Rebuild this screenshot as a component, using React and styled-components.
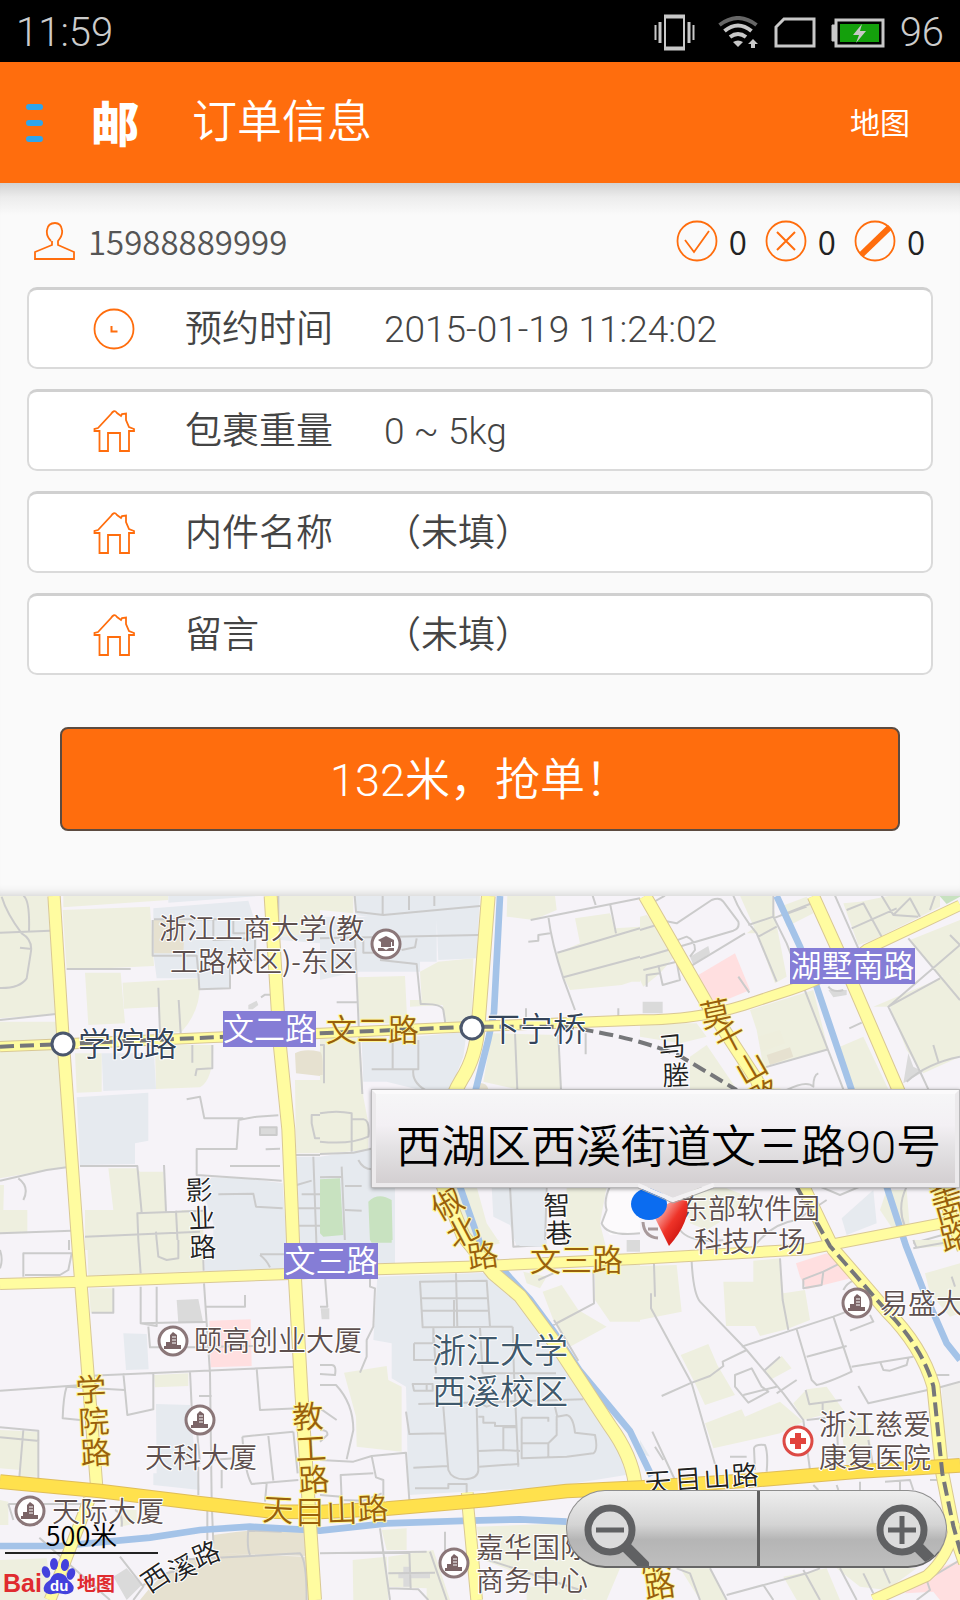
import React from "react";
import styled, { createGlobalStyle } from "styled-components";

const ORANGE = "#ff6d0d";

const ORDER_FIELDS = [
  { icon: "clock", label: "预约时间", value: "2015-01-19 11:24:02" },
  { icon: "house", label: "包裹重量", value: "0 ~ 5kg" },
  { icon: "house", label: "内件名称", value: "（未填）" },
  { icon: "house", label: "留言", value: "（未填）" },
];

// The map is surveyed in six 960x1080 tiles, three map units to a pixel
const TILES = [
  {
    x: 0,
    y: -18,
    areas: {
      green:
        "M0 17H142L168 372L0 385Z M0 395H168L200 830L0 865Z M188 60L450 50L462 228L200 240Z M190 17H505V30L190 52Z M255 248H362L375 400L265 405Z M368 278L600 265Q605 360 545 425L480 430V350L372 356Z M225 490H305V605L230 608Z M465 465H640Q640 570 600 592L468 597Z M0 885H12L10 960H82V1030L0 1030Z M325 835H410L420 845H490L500 965H580V1080H255V960H340Z M835 17H960V130L840 140Z M885 570H960V790L888 790Z M545 960H610V1080H580Z",
      blue:
        "M505 17H790L505 38Z M460 55L745 32L770 110V190L690 200V295H600L595 265H470L460 190Z M305 490H462L468 597L310 603Z M230 622L445 608V752L405 760V822L240 825Z M595 862L740 865L848 880L862 1080H640V1000Z M885 800H960V1080H900Z M840 140L960 130V160L842 150Z",
      beige: "M460 90L555 92L550 190H462Z M885 490Q910 475 960 485V558L888 550Z",
      gray: "M745 345L770 332L775 345L758 358H745Z M780 712H830V735H780Z",
    },
    lines:
      "M5 20Q20 70 65 130Q100 150 92 190L80 265Q60 295 0 294 M70 17Q90 30 87 125 M0 128L150 122 M60 173L95 177 M0 390L168 372 M200 237H392 M475 293L480 430 M536 330L542 430 M458 90V197H590Q595 240 598 298L690 295V210H765V150 M462 88H700V130H760 M640 90V150L760 145 M240 828H412L425 968 M492 825L498 966 M410 970L610 962 M412 968L416 1080 M528 962L534 1080 M255 1040L600 1025 M468 1025L472 1080 M0 872L140 840L200 832 M55 865Q90 890 70 930 M0 1030L215 1022 M207 1050V1080 M560 628L600 620L613 685H730 M577 465V518 M637 465V535L590 538L586 558 M715 690L770 680L835 676 M716 690L710 777H590V855L845 872 M690 828H840 M797 778L840 776 M655 913L760 911L768 950L848 955 M783 322L795 314H810 M780 712H830V735H780Z M885 795L960 795 M940 800L950 1080 M890 885L935 872 M905 913H960 M880 955H960 M895 1007H960 M835 17V100 M960 675H935V700L945 745H960",
  },
  {
    x: 960,
    y: -18,
    areas: {
      green:
        "M0 17H100V70L0 60Z M110 262L255 258L262 400H120Z M270 330H305L300 245L355 215L460 205L455 400L375 395L368 345L270 350Z M562 17H705L710 60L640 90L560 80Z M765 85L870 70L885 115L960 110V275H935L905 285L750 300L720 240L710 190L780 160Z M515 430L715 435L725 598H590L490 575Z M0 445H120L130 620L145 700V780L0 792Z M385 890H470L500 1000L540 1060L480 1075L430 1000Z M740 890H860L840 1000L860 1080H735Z",
      blue:
        "M105 17H480L470 205L355 210L350 90L200 88L105 75Z M0 80H350V215H300V245H110L0 270Z M125 455L440 425L430 500L390 600H300L200 575H130Z M0 800L160 775V890H225V1080H0Z M515 890H675V1070H590L570 1005L520 980Z",
      park: "M0 868L60 865L70 1035L10 1040L0 1030Z M145 935Q175 905 215 930L218 1055H150Z",
      beige: "M470 580Q500 575 505 598H470Z M0 485Q10 490 8 555H0Z",
      white: "M870 890Q930 880 960 890V1030L870 1035L845 1000L860 950Z",
    },
    lines:
      "M104 17L108 65L190 75L480 48 M188 17V73 M267 17V60 M343 17V48 M0 145L475 135 M130 150V188H180 M105 150L118 450L127 612 M50 337H110 M245 180L285 172L290 145 M180 210L290 222L302 342Q365 340 370 360L376 400 M0 465H12V580 M218 455V535 M155 538H295V450 M280 540Q275 580 325 605 M0 670Q50 660 95 670V785 M0 755Q90 765 145 740Q150 690 130 688H98 M0 792L100 788L160 775 M65 830L75 1060 M0 862L65 860 M75 888H125 M75 960L125 962 M115 810Q130 840 160 838 M818 17L827 45 M632 90L960 25 M870 40L888 130 M712 188L960 115 M685 80Q695 160 730 265L765 360 M625 155L655 152V135L690 130 M730 262L960 200 M618 355V385 M585 430L592 600 M715 435L723 600 M797 430V493 M895 355V378 M570 890L580 1070L675 1065L680 890 M870 890Q850 930 860 960L845 1000Q860 1040 960 1030",
  },
  {
    x: 1920,
    y: -18,
    areas: {
      green:
        "M0 80L20 75L120 180L60 250L10 290L0 270Z M300 17H395L410 105L440 260L405 280L350 130Z M420 50L500 20L520 70L440 110Z M610 40L660 35L750 17H900V50L700 150L655 165Z M330 360L520 300L565 480L370 530L350 420Z M600 470L670 440L745 598H640Z M150 500L200 465L290 598H150Z M700 350L890 270L960 230V500L850 550L800 480L750 350Z M810 150L960 90V250L900 260Z M120 890L260 895L350 930L200 1020L150 1000Z M720 960L740 900L800 900L810 1020H760Z M0 400H170L200 440L120 460L0 440Z",
      pink: "M175 255L285 190L330 300L245 335L205 330Z",
      beige: "M380 495L450 472L460 500L390 525Z",
      park: "M898 17H960V20L920 42Z",
      gray: "M150 200L205 168L210 190L160 225Z M8 335H68V370H8Z M565 300H620V315L580 322Z M790 580L805 490L820 530L850 545Z",
      blue: "M605 985L700 900L710 1000L620 1035Z",
      soft: "M355 440L420 420L435 460L365 485Z M320 130L390 80L410 130Z",
    },
    lines:
      "M25 45L75 17 M0 120L50 105L60 90L110 100L215 30Q240 20 250 35L295 95Q300 115 280 122L0 205 M10 240L110 215L120 270L68 285L55 225 M20 290V255L60 250 M100 155L140 140Q165 150 165 180L150 200 M150 230L315 130 M280 17Q300 70 350 130L410 275 M325 105L400 80V17 M400 80L440 160L610 598 M355 140L410 110 M400 85L540 30 M430 75L500 50 M585 17L655 175 M620 60L670 40L725 140 M635 115L770 55 M725 17L760 75L835 80 M760 75L810 25L840 80 M805 145L960 330 M885 17L870 60 M930 135L960 165L745 350L845 555L865 598 M745 350L900 265 M880 465L895 515 M960 500Q860 520 800 575 M295 260L328 308 M365 535L565 478 M440 600Q500 570 520 590Q520 555 535 550 M628 415L665 398 M565 290Q580 310 610 300 M540 890L600 915L660 890 M800 890Q770 950 795 1010 M350 1060Q400 1000 470 990L560 930 M820 1060L960 1020 M120 1020Q150 1060 250 1050",
  },
  {
    x: 0,
    y: 1032,
    areas: {
      green:
        "M262 0H608L612 92L265 108Z M268 145H340V218H272Z M462 405L565 400V438L465 442Z M0 570L115 575L118 600L112 710H60V690L0 685Z M0 780L25 785V855H0Z M0 960L140 955L160 1080H0Z M360 810H410V850L360 860Z",
      blue: "M612 0H870V90L615 95Z M370 280L440 282L446 388L378 390Z M468 492L570 495L580 600L600 750L460 735V700H470Z",
      pink: "M628 242L752 238L755 378L632 382Z",
      beige: "M420 1080Q520 950 640 940L920 950V1080Z M640 885Q800 860 920 868V948L640 940Z",
      gray: "M530 180L595 177L610 250H535Z M340 1010L380 985L425 1035L380 1080Z",
    },
    lines:
      "M70 110V40H215L205 90L180 105H75 M0 30Q10 60 0 85 M415 0L422 100 M470 0L475 50L500 60L535 55V0 M608 0L611 92 M780 45Q800 60 810 82 M780 43H870 M340 145V218H275 M422 140V250L470 258V140 M612 130L630 400L635 780 M615 200H735V165 M425 250L620 245 M445 260L450 322H620 M628 320L760 318 M0 452L290 432 M255 408L890 380 M370 400L375 450L200 440Q190 470 188 535L240 540 M375 450L382 525L460 508V402 M570 395L575 500 M597 468H635 M770 385L780 510L895 505 M0 562L115 572V715 M0 592L118 603 M70 570L58 712 M727 590L880 575 M727 590Q735 700 755 732L895 720 M805 588L820 722 M880 575L893 700 M800 730L795 785 M630 660L705 655 M665 690V745 M595 680V765 M590 560L600 670 M25 792H250 M25 792L40 840 M118 893L250 1010L330 1080 M360 950L430 1040L400 1080 M622 810V900 M636 810L640 910 M745 870Q740 920 750 945 M745 872L845 875 M520 960L900 940Q920 960 920 1080 M430 1035L500 1000L560 985 M365 860Q370 820 345 810",
  },
  {
    x: 960,
    y: 1032,
    areas: {
      green:
        "M72 398L200 378L205 420L245 440V635L110 620L108 530Z M825 75H960V245H870L825 180Z M668 155L725 135L775 210L860 260L750 320L700 240Z M610 95L680 110L660 145L620 130Z M470 860L735 850L900 985L860 1080H800L490 960Z M98 960L200 950L205 1080H100Z M185 870L260 865V930H200Z M205 950L340 930L390 1080H320V1045L205 1040Z M620 1040H790V1080H620Z M480 0H540L510 20Z",
      blue: "M172 110L500 98L590 180L730 350L890 600L918 705L700 740L265 765L258 440L215 415V310L160 300Z M580 0H680V20L600 18Z M0 0H225V70H180Z",
      gray: "M2 205H28V238H5Z M235 1000H330V1015H235Z M250 980H270V1040H250Z M920 0H960V35H920Z",
      park: "M150 0H215V8H155Z",
    },
    lines:
      "M15 110L22 200H0 M150 90V140L165 145L160 260L140 300V350L120 398 M300 125L500 122L510 260L308 262Z M300 175L503 174 M302 212L506 212 M408 100L412 262 M402 180V262 M282 310H340V262L348 400 M282 310V360H345 M480 262L488 400 M578 260L582 400L595 680 M510 260H578 M488 400H708 M278 432H338V452H282Z M320 432V452 M295 492L790 478 M480 490L500 500L530 490 M370 500L385 690Q395 718 435 718Q475 715 475 690L470 500 M258 515L268 582L375 580 M280 683L382 678 M285 745H385V732H440V765 M475 633L550 630V562H590 M475 530H490V548H525V558H590 M478 680L598 672 M550 630L600 633 M605 533H685V545 M605 533V655L740 650L820 640Q835 630 825 585L765 578Q760 530 740 525L710 530L710 585L685 610H608 M685 610V650 M705 500L712 530 M0 375H35Q50 375 45 405L0 402 M0 435H48Q100 490 100 570L80 658 M0 505L50 540 M0 570Q25 570 22 585L0 605 M0 660L100 665L155 648L258 638L268 780 M155 648L168 712L190 720V800 M160 700L62 705L65 780L130 782L185 760 M0 765L65 770 M180 865L210 1080 M0 940L320 935 M330 935L380 1080 M268 935L272 1045 M205 1000L345 998 M205 1045L295 1048L325 1080 M375 875V935 M490 955L780 1050 M820 90L822 190L700 255 M655 120L700 100 M702 240L775 362",
  },
  {
    x: 1920,
    y: 1032,
    areas: {
      green:
        "M0 78L110 75L125 215L0 240Z M250 125H340V62L420 55L430 160L495 150L510 240L440 268L360 288L345 258H258Z M122 345L205 312L232 375L285 465L195 495L165 430Z M375 395L425 348L455 385L390 420Z M195 550L305 508L315 530L420 485L490 545L420 580L220 625Z M460 490L500 448L560 440L610 510L490 540Z M855 100L960 70V220L930 230L870 160Z M820 0H960V15L830 25Z M600 540L680 530L700 670L620 680Z M430 1010L560 985L600 1080H470Z M590 985H830L740 1050L660 1040Z M120 985H210L260 1080H180Z",
      pink: "M468 70L560 40L600 70L650 110L500 148L480 110Z M795 1060L860 1000L960 960V1080H900L880 1055Z",
      blue: "M0 600L30 650L0 640Z",
      stone: "M905 440L960 425V655L915 650Z",
    },
    lines:
      "M42 72L45 170 M33 160V205L155 430L230 690 M155 65Q160 160 180 185L320 330L430 460L490 540L510 690 M420 55L428 180L445 270 M305 320L580 230L635 395Q560 430 530 435L515 420L470 268 M500 350L620 318 M580 230L620 215 M635 380L820 350 M720 365L730 390L750 392L800 375L805 355 M490 118L550 95L545 135L490 145Z M550 95L600 70 M610 150Q620 130 640 122 M630 272L700 245L690 225 M65 468L150 430L210 408L250 378L248 365L320 330 M285 405L335 385L365 440L385 455L325 488L285 440Z M310 465L410 440 M375 390L420 350 M410 460L470 420 M497 450L508 493L605 480 M548 490V510 M500 540L590 530 M655 438L685 490L900 442L960 425 M890 405H928 M270 650H320 M345 690L342 625Q345 612 375 615Q385 640 380 695 M37 575L105 720 M45 620L70 660 M590 545L597 690 M685 600L700 680 M820 25L960 0 M830 25L820 0 M935 110L945 140 M960 960L860 1020L870 1050L830 1080 M110 985L150 1000L180 1080 M210 985L260 1080 M260 1065L500 1000L540 985 M370 1035L400 1080 M490 990L540 1080 M600 985L650 1080 M670 1000L700 1060 M730 985L750 1030 M520 735L535 750 M590 735L595 750 M660 725V750 M735 725L810 720L820 750 M780 720V750 M870 720H900V760",
  },
];

const AREA_COLORS = {
  green: "#eeefdf",
  blue: "#e6eaef",
  park: "#c8e2c0",
  beige: "#e6e1d0",
  gray: "#dadada",
  pink: "#ffdfe0",
  soft: "#eeeedd",
  stone: "#eeedea",
  white: "#fcfafc",
};

const RIVERS = [
  { d: "M1500 0L1482 350L1465 430L1425 590L1360 730L1380 872L1440 1042L1530 1145L1590 1210L1660 1305L1740 1425L1890 1605L1955 1740", width: 20 },
  { d: "M2330 0L2400 152L2450 272L2555 582L2660 872L2718 1050L2770 1182L2840 1342L2880 1392", width: 20 },
  { d: "M0 1950H180L450 1925L600 1902L750 1892L960 1904L1160 1882L1410 1874L1560 1870L1700 1877", width: 20 },
];

const ROADS = [
  { d: "M268 1810L150 2112", width: 32 },
  { d: "M162 0L190 442L235 1062L290 1772", width: 34 },
  { d: "M812 0L840 452L865 700L880 1060L905 1502L945 2112", width: 36 },
  { d: "M0 452L190 444L640 424L960 412L1410 392L1920 372Q2090 372 2230 328L2370 282Q2500 240 2600 160L2880 28", width: 28 },
  { d: "M1465 0L1435 382Q1430 480 1385 550Q1330 640 1320 780L1330 872L1390 1020L1480 1132L1560 1200L1680 1362L1830 1590Q1895 1680 1905 1762L1970 2112", width: 38 },
  { d: "M0 1164L250 1157L870 1134L1130 1120L1400 1112L1920 1088L2420 1060L2810 985L2880 970", width: 30 },
  { d: "M1935 0L2120 322L2270 552L2410 872L2500 1060L2660 1245Q2765 1350 2800 1470L2827 1732L2860 1900L2895 2000", width: 36 },
  { d: "M2865 1880Q2850 1980 2780 2040L2620 2112", width: 30 },
  { d: "M2440 0L2535 210L2695 582L2820 872L2890 1060", width: 34 },
  { d: "M1402 1790L1405 1842L1430 2112", width: 32 },
];

const MAIN_ROAD =
  "M0 1757L300 1785L600 1822L820 1847L960 1848L1160 1838L1460 1812L1700 1785L1920 1775L2270 1752L2570 1727L2880 1708";

const METRO_LINES = [
  "M0 452L190 444L640 424L960 412L1410 392H1690Q1900 420 2040 480L2210 582",
  "M2390 872L2490 1050L2660 1245Q2765 1350 2800 1470L2827 1732L2860 1890L2885 1980",
];

const PLACES = [
  { text: "浙江工商大学(教", x: 159, y: 43 },
  { text: "工路校区)-东区", x: 170, y: 76 },
  { text: "颐高创业大厦", x: 194, y: 455 },
  { text: "天科大厦", x: 145, y: 572 },
  { text: "天际大厦", x: 52, y: 626 },
  { text: "嘉华国际", x: 476, y: 662 },
  { text: "商务中心", x: 476, y: 695 },
  { text: "浙江慈爱", x: 819, y: 539 },
  { text: "康复医院", x: 819, y: 572 },
  { text: "易盛大厦", x: 880, y: 418 },
  { text: "东部软件园", x: 680, y: 323 },
  { text: "科技广场", x: 694, y: 356 },
  { text: "下宁桥", x: 487, y: 145, kind: "station" },
  { text: "学院路", x: 78, y: 160, kind: "station" },
  { text: "浙江大学", x: 432, y: 467, kind: "campus" },
  { text: "西溪校区", x: 432, y: 508, kind: "campus" },
  { text: "文二路", x: 326, y: 145, kind: "road" },
  { text: "文三路", x: 530, y: 375, kind: "road" },
];

const ROAD_TAGS = [
  { text: "文二路", x: 223, y: 115, width: 93 },
  { text: "湖墅南路", x: 790, y: 52, width: 125 },
  { text: "文三路", x: 284, y: 347, width: 94 },
];

// [character, centre x, centre y, angle]
const STREET_NAMES = [
  { kind: "road", chars: [["莫", 716, 119, -12], ["千", 731, 143, -28], ["山", 752, 173, -30], ["路", 767, 200, -28]] },
  { kind: "road", chars: [["学", 91, 495, -3], ["院", 94, 527, -3], ["路", 96, 558, -3]] },
  { kind: "road", chars: [["教", 308, 522, -3], ["工", 311, 554, -3], ["路", 314, 585, -3]] },
  { kind: "road", chars: [["俶", 448, 309, -30], ["北", 463, 337, -28], ["路", 483, 361, -8]] },
  { kind: "road", chars: [["墅", 943, 290, -18], ["南", 950, 316, -16], ["路", 956, 342, -14]] },
  { kind: "road", chars: [["天", 278, 615, 3], ["目", 310, 617, 0], ["山", 342, 616, -2], ["路", 373, 614, -3]] },
  { kind: "road", chars: [["顺", 655, 664, -10], ["路", 660, 691, -8]] },
  { kind: "lane", chars: [["影", 199, 294, -2], ["业", 202, 322, -2], ["路", 203, 351, -2]] },
  { kind: "lane", chars: [["智", 557, 309, -2], ["巷", 559, 337, -2]] },
  { kind: "lane", chars: [["马", 672, 150, -6], ["塍", 676, 179, -2]] },
  { kind: "lane", chars: [["天", 658, 586, -4], ["目", 688, 583, -4], ["山", 717, 581, -4], ["路", 745, 579, -4]] },
  { kind: "lane", chars: [["西", 155, 682, -34], ["溪", 182, 672, -22], ["路", 206, 658, -22]] },
];

const BUILDINGS = [
  [173, 445],
  [200, 524],
  [30, 615],
  [454, 667],
  [857, 407],
];

const StatusIcons = () => (
  <>
    <svg width="41" height="37" viewBox="0 0 41 37" fill="none" stroke="#c8c8c8">
      <rect x="11" y="2" width="19" height="33" rx="1" strokeWidth="2" />
      <path d="M10 2.500H31M10 34.500H31" strokeWidth="4" />
      <path d="M6 8V29M35 8V29" strokeWidth="3" />
      <path d="M1.500 11V26M39.500 11V26" strokeWidth="2" />
    </svg>
    <svg width="41" height="33" viewBox="0 0 41 33" fill="none" stroke="#c8c8c8" strokeWidth="4">
      <path d="M1.500 9Q20 -5 38.500 9" stroke="#666" />
      <path d="M6.500 15Q20 4 33.500 15" />
      <path d="M12 21Q20 15 28 21" />
      <path d="M15 26Q20 23 25 26L20 31Z" fill="#c8c8c8" stroke="none" />
      <path d="M35 23L40 28H37V32H33V28H30Z" fill="#c8c8c8" stroke="none" />
    </svg>
    <svg width="42" height="32" viewBox="0 0 42 32" fill="none">
      <path d="M10 2H40V29H2V10Z" stroke="#c8c8c8" strokeWidth="3" />
    </svg>
    <svg width="54" height="32" viewBox="0 0 54 32">
      <path d="M1 8H4V24H1Z" fill="#c8c8c8" stroke="#c8c8c8" />
      <rect x="5" y="3" width="47" height="26" fill="none" stroke="#c8c8c8" strokeWidth="3" />
      <rect x="9" y="7" width="39" height="18" fill="#14a00c" />
      <path d="M31 7L22 18H28L25 26L35 14H29Z" fill="#c8c8c8" />
    </svg>
  </>
);

const UserIcon = () => (
  <svg width="42" height="38" viewBox="0 0 42 38" fill="none" stroke={ORANGE} strokeWidth="1.800">
    <path d="M18 19V23L1 30V37H40V30L24 23V19Q29 13 28 8Q27 1 21 1Q14 1 13 8Q12 14 17 19" />
  </svg>
);

const RoundIcon = ({ children }) => (
  <svg width="42" height="42" viewBox="0 0 42 42" fill="none" stroke={ORANGE}>
    <circle cx="21" cy="21" r="19.500" strokeWidth="1.800" />
    {children}
  </svg>
);

const HouseIcon = () => (
  <svg width="42" height="42" viewBox="0 0 42 42" fill="none" stroke={ORANGE} strokeWidth="1.800">
    <path d="M6.500 21H1.500V19L5 18L18 4Q21 -1 24 3L28 6L29 4L33 3.500V10L36 17L41 19V21H36V41H27V23H15V41H6.500Z" />
  </svg>
);

const FieldIcon = ({ name }) =>
  name === "clock" ? (
    <RoundIcon>
      <path d="M18.500 18V23.500H24.500" strokeWidth="2" />
    </RoundIcon>
  ) : (
    <HouseIcon />
  );

const MagnifierIcon = ({ plus }) => (
  <svg width="66" height="64" viewBox="0 0 66 64" fill="none" stroke="#606163">
    <path d="M41 42L64 65" strokeWidth="11" />
    <circle cx="27" cy="27" r="22" fill="#dcdcdc" strokeWidth="7" />
    <path d={plus ? "M13 27H41M27 13V41" : "M13 27H41"} strokeWidth="5" />
  </svg>
);

const BaiduLogo = () => (
  <svg width="116" height="42" viewBox="0 0 116 42">
    <text x="3" y="37" fill="#e02b2f" fontFamily="Liberation Sans, sans-serif" fontWeight="700" fontSize="25">
      Bai
    </text>
    <g fill="#4341dd">
      <ellipse cx="46" cy="17" rx="4" ry="6" transform="rotate(-20 46 17)" />
      <ellipse cx="54" cy="9" rx="4" ry="6" />
      <ellipse cx="65" cy="10" rx="4" ry="6" transform="rotate(10 65 10)" />
      <ellipse cx="71" cy="19" rx="4" ry="6" transform="rotate(20 71 19)" />
      <path d="M58 18Q65 18 68 25Q76 31 73 36Q69 41 58 38Q47 41 44 36Q42 30 50 25Q53 18 58 18Z" />
    </g>
    <text x="50" y="36" fill="#fff" fontFamily="Liberation Sans, sans-serif" fontWeight="700" fontSize="15">
      du
    </text>
    <text x="77" y="36" fill="#e02b2f" fontFamily="Noto Sans CJK SC, sans-serif" fontWeight="700" fontSize="19">
      地图
    </text>
  </svg>
);

const MapDrawing = () => (
  <MapCanvas viewBox="0 0 960 704" role="img" aria-label="西湖区地图">
    <rect width="960" height="704" fill="#f6f3f8" />
    <g transform="scale(0.33333)" fill="none">
      {TILES.map(({ x, y, areas, lines }) => (
        <g key={`${x}/${y}`} transform={`translate(${x} ${y})`}>
          {Object.entries(areas).map(([kind, d]) => (
            <path key={kind} d={d} fill={AREA_COLORS[kind]} />
          ))}
          <path d={lines} stroke="#cbcbcb" strokeWidth="6" strokeLinejoin="round" />
        </g>
      ))}
      {RIVERS.map(({ d, width }) => (
        <path key={d} d={d} stroke="#a4c3e8" strokeWidth={width} />
      ))}
      {ROADS.map(({ d, width }) => (
        <path key={d} d={d} stroke="#d9c894" strokeWidth={width + 6} strokeLinejoin="round" />
      ))}
      {ROADS.map(({ d, width }) => (
        <path key={d} d={d} stroke="#fffca0" strokeWidth={width} strokeLinejoin="round" />
      ))}
      <path d={MAIN_ROAD} stroke="#dfbd59" strokeWidth="44" />
      <path d={MAIN_ROAD} stroke="#ffe14d" strokeWidth="38" />
      {METRO_LINES.map((d) => (
        <path key={d} d={d} stroke="#76777a" strokeWidth="12" strokeDasharray="42 18" />
      ))}
    </g>
    {ROAD_TAGS.map(({ text, x, y, width }) => (
      <g key={text + x}>
        <rect x={x} y={y} width={width} height="36" fill="#857dd6" />
        <TagText x={x + width / 2} y={y + 29}>
          {text}
        </TagText>
      </g>
    ))}
    {STREET_NAMES.map(({ kind, chars }, i) => (
      <g key={i}>
        {chars.map(([char, x, y, angle]) => (
          <StreetChar key={char} $kind={kind} transform={`translate(${x} ${y}) rotate(${angle})`} y="10">
            {char}
          </StreetChar>
        ))}
      </g>
    ))}
    {PLACES.map(({ text, x, y, kind }) => (
      <PlaceName key={text + x} x={x} y={y} $kind={kind}>
        {text}
      </PlaceName>
    ))}
    <g fill="#fff" stroke="#4b576d" strokeWidth="3">
      <circle cx="63" cy="148" r="11" />
      <circle cx="472" cy="132" r="11" />
    </g>
    <g transform="translate(386 48)">
      <circle r="14" fill="#fff" stroke="#8b7779" strokeWidth="3" />
      <path d="M-8 -4L0 -8L8 -4V2H6V-2L5 -2V3H-5V-2ZM-8 4H-3L0 6L3 4H8V7H-8Z" fill="#806a6c" />
    </g>
    {BUILDINGS.map(([x, y]) => (
      <g key={x} transform={`translate(${x} ${y})`}>
        <circle r="14" fill="#fff" stroke="#8b7779" strokeWidth="3" />
        <path d="M-9 8V5H-7V1H-3V-6L0 -9L4 -6V4H8V8Z" fill="#7b6466" />
        <path d="M-1 -4H3M-1 -1H3M-1 2H3" stroke="#fff" strokeWidth="1" />
      </g>
    ))}
    <g transform="translate(798 545)">
      <circle r="14" fill="#fff" stroke="#dd4a45" strokeWidth="3" />
      <path d="M-3 -8H3V-3H8V3H3V8H-3V3H-8V-3H-3Z" fill="#e2443d" />
    </g>
    <path d="M643 326Q644 341 658 342M648 333H658" fill="none" stroke="#a8999b" strokeWidth="3" />
    <linearGradient id="pinRed" x1="0" y1="0" x2="1" y2="1">
      <stop offset="0" stopColor="#fff0ee" />
      <stop offset="0.500" stopColor="#ee3328" />
      <stop offset="1" stopColor="#b80000" />
    </linearGradient>
    <path d="M655 322Q668 300 687 305Q691 325 669 350Z" fill="url(#pinRed)" />
    <ellipse cx="649" cy="308" rx="18" ry="16" fill="#0b6cf0" />
  </MapCanvas>
);

const App = () => (
  <>
    <GlobalStyle />
    <StatusBar>
      <span>11:59</span>
      <StatusGroup>
        <StatusIcons />
        <span>96</span>
      </StatusGroup>
    </StatusBar>
    <Header>
      <MenuButton type="button" aria-label="菜单">
        <MenuDash />
        <MenuDash />
        <MenuDash />
      </MenuButton>
      <Brand>邮</Brand>
      <Title>订单信息</Title>
      <MapLink href="#map">地图</MapLink>
    </Header>
    <Order>
      <Customer>
        <UserIcon />
        <Phone>15988889999</Phone>
        <Stat>
          <RoundIcon>
            <path d="M9 20L18 32L33 11" strokeWidth="1.800" />
          </RoundIcon>
          0
        </Stat>
        <Stat>
          <RoundIcon>
            <path d="M12 12L30 30M30 12L12 30" strokeWidth="2" />
          </RoundIcon>
          0
        </Stat>
        <Stat>
          <RoundIcon>
            <path d="M7 35L36 7" strokeWidth="6" />
          </RoundIcon>
          0
        </Stat>
      </Customer>
      <Fields>
        {ORDER_FIELDS.map(({ icon, label, value }) => (
          <Field key={label}>
            <FieldIcon name={icon} />
            <FieldLabel>{label}</FieldLabel>
            <FieldValue>{value}</FieldValue>
          </Field>
        ))}
      </Fields>
      <GrabButton type="button">132米，抢单！</GrabButton>
    </Order>
    <MapPanel id="map">
      <MapDrawing />
      <Bubble>
        西湖区西溪街道文三路90号
        <BubbleTail viewBox="0 0 80 22">
          <path d="M0 0L35 15L74 0V-4H0Z" fill="#e2dfe1" />
          <path d="M0 2L35 17L76 2" fill="none" stroke="#f3f1f3" strokeWidth="4" />
          <path d="M0 5L35 20L76 5" fill="none" stroke="#a9a8aa" strokeWidth="1" />
        </BubbleTail>
      </Bubble>
      <Scale>500米</Scale>
      <Logo>
        <BaiduLogo />
      </Logo>
      <ZoomControl>
        <ZoomButton type="button" aria-label="缩小">
          <MagnifierIcon />
        </ZoomButton>
        <ZoomButton type="button" aria-label="放大" $end>
          <MagnifierIcon plus />
        </ZoomButton>
      </ZoomControl>
    </MapPanel>
  </>
);

const GlobalStyle = createGlobalStyle`
  * {
    box-sizing: border-box;
  }

  body {
    margin: 0;
    background: #fafafa;
    color: #444;
    font-family: Roboto, "Noto Sans CJK SC", sans-serif;
    font-weight: 350;
  }

  svg {
    display: block;
    flex-shrink: 0;
  }
`;

const StatusBar = styled.div`
  display: flex;
  align-items: center;
  justify-content: space-between;
  height: 62px;
  padding: 3px 16px 0;
  background: #000;
  color: #ccc;
  font-size: 40px;
  font-weight: 300;
  line-height: 48px;
`;

const StatusGroup = styled.div`
  display: flex;
  align-items: center;
  gap: 15px;

  & svg:first-child {
    margin-right: 8px;
  }
`;

const Header = styled.header`
  display: flex;
  align-items: center;
  height: 121px;
  padding: 0 50px 0 26px;
  background: ${ORANGE};
  color: #fff;
`;

const MenuButton = styled.button`
  display: flex;
  flex-direction: column;
  gap: 10px;
  padding: 0;
  border: 0;
  background: none;
`;

const MenuDash = styled.span`
  width: 17px;
  height: 6px;
  border-radius: 3px;
  background: #2fa5ec;
`;

const Brand = styled.span`
  margin-left: 48px;
  padding-bottom: 4px;
  font-family: "Noto Sans CJK SC", sans-serif;
  font-size: 48px;
  font-weight: 900;
  line-height: 60px;
`;

const Title = styled.h1`
  margin: 0 auto 0 53px;
  font-size: 45px;
  font-weight: 350;
  line-height: 60px;
`;

const MapLink = styled.a`
  padding-bottom: 4px;
  color: #fff;
  font-size: 30px;
  font-weight: 400;
  text-decoration: none;
`;

const Order = styled.main`
  padding: 34px 27px 65px;
  background: linear-gradient(#d2d2d2, #ececec 14px, #fafafa 32px);
  box-shadow: inset 0 -10px 10px -8px rgba(0, 0, 0, 0.16);
`;

const Customer = styled.div`
  display: flex;
  align-items: center;
  height: 48px;
  padding: 0 8px 0 7px;
  font-family: "Noto Sans CJK SC", sans-serif;
  font-size: 33px;
  line-height: 48px;
`;

const Phone = styled.span`
  margin: 0 auto 0 12px;
  color: #555;
`;

const Stat = styled.span`
  display: flex;
  gap: 11px;
  align-items: center;
  margin-left: 18px;
  color: #222;
`;

const Fields = styled.dl`
  display: flex;
  flex-direction: column;
  gap: 20px;
  margin: 22px 0 0;
`;

const Field = styled.div`
  display: grid;
  grid-template-columns: 42px 149px 1fr;
  column-gap: 50px;
  align-items: center;
  height: 82px;
  padding: 0 64px;
  border: 2px solid #dadada;
  border-top: 3px solid #d0d0d0;
  border-radius: 10px;
  background: #fff;
  font-size: 37px;
  line-height: 48px;
`;

const FieldLabel = styled.dt`
  padding-top: 3px;
  white-space: nowrap;
`;

const FieldValue = styled.dd`
  margin: 0;
  padding-top: 3px;
`;

const GrabButton = styled.button`
  display: block;
  width: calc(100% - 66px);
  height: 104px;
  margin: 52px auto 0;
  padding: 0 0 5px;
  border: 2px solid #5c4b40;
  border-radius: 8px;
  background: ${ORANGE};
  color: #fff;
  font: inherit;
  font-size: 45px;
`;

const MapPanel = styled.section`
  position: relative;
  overflow: hidden;
`;

const MapCanvas = styled.svg`
  width: 100%;
  height: auto;
`;

const LABEL_STYLES = {
  place: { size: 28, color: "#5d4f4e", halo: "#fff" },
  station: { size: 33, color: "#34445a", halo: "#fff" },
  campus: { size: 34, color: "#40596c", halo: "#fff" },
  road: { size: 31, color: "#99600b", halo: "#fff79a" },
  lane: { size: 27, color: "#222", halo: "#fff" },
};

const MapText = styled.text`
  font-family: "Noto Sans CJK SC", sans-serif;
  font-size: ${({ $kind = "place" }) => LABEL_STYLES[$kind].size}px;
  fill: ${({ $kind = "place" }) => LABEL_STYLES[$kind].color};
  stroke: ${({ $kind = "place" }) => LABEL_STYLES[$kind].halo};
  stroke-width: 2px;
  stroke-linejoin: round;
  paint-order: stroke;
`;

const PlaceName = styled(MapText)``;

const StreetChar = styled(MapText)`
  text-anchor: middle;
`;

const TagText = styled.text`
  font-family: "Noto Sans CJK SC", sans-serif;
  font-size: 31px;
  fill: #fff;
  text-anchor: middle;
`;

const Bubble = styled.div`
  position: absolute;
  top: 194px;
  right: 1px;
  padding: 24px 14px 5px 20px;
  border: 4px solid #eceaec;
  border-top-color: #fbfafb;
  outline: 1px solid #b9b8ba;
  background: linear-gradient(#f6f6f7 0%, #f3f0f4 35%, #e4e2e4 60%, #d3cfd1 100%);
  box-shadow: 0 1px 4px 1px rgba(0, 0, 0, 0.4);
  color: #000;
  font-size: 45px;
  line-height: 60px;
  white-space: nowrap;
`;

const BubbleTail = styled.svg`
  position: absolute;
  top: 100%;
  left: 262px;
  width: 80px;
  height: 22px;
`;

const Scale = styled.div`
  position: absolute;
  left: 5px;
  bottom: 46px;
  width: 153px;
  border-bottom: 2px solid #222;
  color: #000;
  font-family: "Noto Sans CJK SC", sans-serif;
  font-size: 27px;
  line-height: 34px;
  text-align: center;
`;

const Logo = styled.div`
  position: absolute;
  left: 0;
  bottom: 3px;
`;

const ZoomControl = styled.div`
  position: absolute;
  right: 13px;
  bottom: 32px;
  display: grid;
  grid-template-columns: 1fr 1fr;
  width: 381px;
  height: 78px;
  overflow: hidden;
  border: 1px solid #8e8e8e;
  border-bottom: 2px solid #666;
  border-radius: 40px;
  background: linear-gradient(#eee 0%, #d4d4d4 45%, #b5b5b5 65%, #bebebe 100%);
`;

const ZoomButton = styled.button`
  display: flex;
  justify-content: ${({ $end }) => ($end ? "flex-end" : "flex-start")};
  padding: ${({ $end }) => ($end ? "12px 5px 0 0" : "12px 0 0 16px")};
  border: 0;
  border-left: ${({ $end }) => ($end ? "3px solid #606060" : "0")};
  background: none;
`;

export default App;
